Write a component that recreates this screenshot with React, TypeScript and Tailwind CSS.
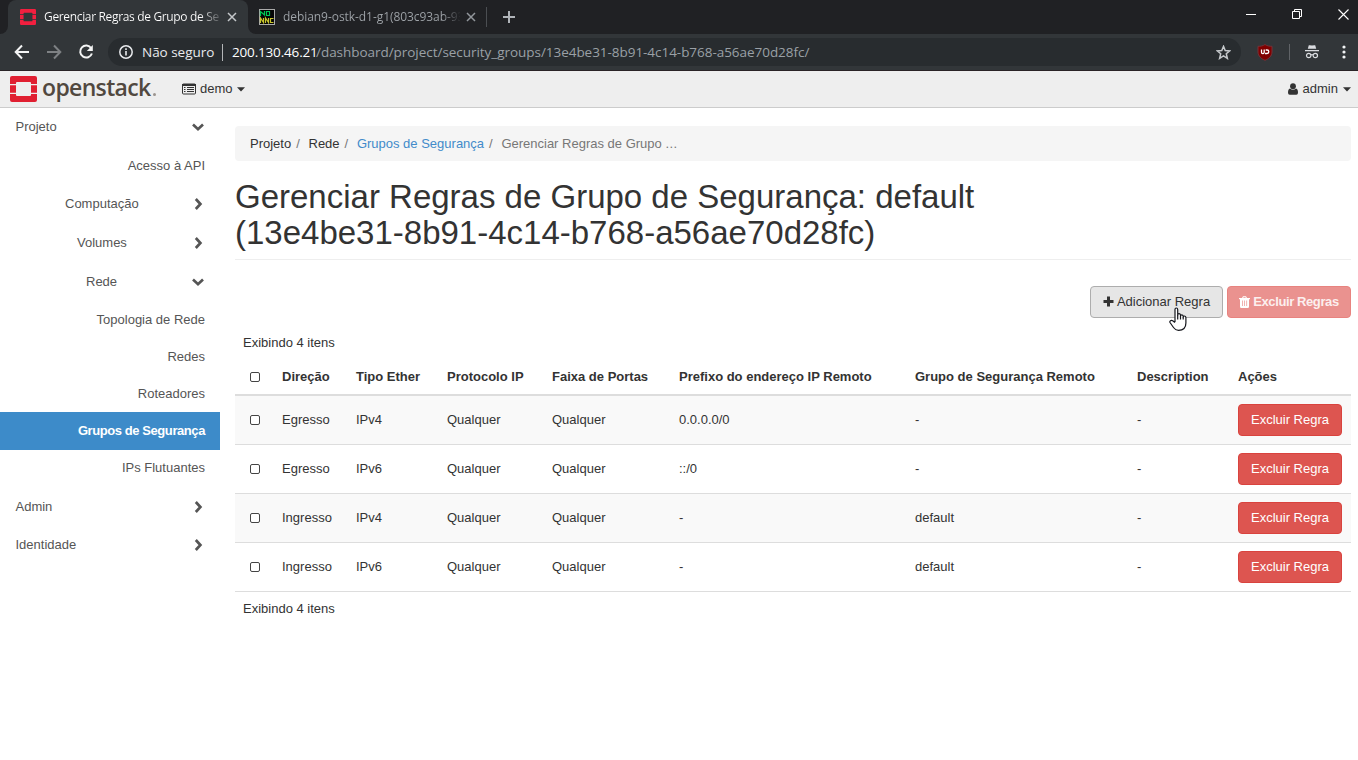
import React from "react";

type NavItem = { label: string; box: string; icon?: "down" | "right"; active?: boolean };

const NAV: NavItem[] = [
  { label: "Projeto", box: "h-[38px] pl-[15.5px]", icon: "down" },
  { label: "Acesso à API", box: "h-[39px]" },
  { label: "Computação", box: "h-[38px] pl-[65px]", icon: "right" },
  { label: "Volumes", box: "h-[39px] pl-[77px]", icon: "right" },
  { label: "Rede", box: "h-[39px] pl-[86px]", icon: "down" },
  { label: "Topologia de Rede", box: "h-[37px]" },
  { label: "Redes", box: "h-[37px]" },
  { label: "Roteadores", box: "h-[37px]" },
  { label: "Grupos de Segurança", box: "h-[38px]", active: true },
  { label: "IPs Flutuantes", box: "h-[37px] pb-[2px]" },
  { label: "Admin", box: "h-[39px] pl-[15.5px]", icon: "right" },
  { label: "Identidade", box: "h-[38px] pl-[15.5px]", icon: "right" },
];

const ROWS = [
  ["Egresso", "IPv4", "Qualquer", "Qualquer", "0.0.0.0/0", "-", "-"],
  ["Egresso", "IPv6", "Qualquer", "Qualquer", "::/0", "-", "-"],
  ["Ingresso", "IPv4", "Qualquer", "Qualquer", "-", "default", "-"],
  ["Ingresso", "IPv6", "Qualquer", "Qualquer", "-", "default", "-"],
];

const HEADERS = [
  "Direção",
  "Tipo Ether",
  "Protocolo IP",
  "Faixa de Portas",
  "Prefixo do endereço IP Remoto",
  "Grupo de Segurança Remoto",
  "Description",
  "Ações",
];

const GRID = "grid grid-cols-[39px_74px_91px_105px_127px_236px_222px_101px_121px] items-center";

function OpenStackMark({ className, color }: { className: string; color: string }) {
  return (
    <svg viewBox="0 0 27 26" className={className} fill={color} preserveAspectRatio="none">
      <path d="M2 0H25Q27 0 27 2V8H21V7Q21 6 20 6H7Q6 6 6 7V8H0V2Q0 0 2 0Z" />
      <path d="M0 9.3H6V16.7H0ZM21 9.3H27V16.7H21Z" />
      <path d="M0 18H6V19Q6 20 7 20H20Q21 20 21 19V18H27V24Q27 26 25 26H2Q0 26 0 24Z" />
    </svg>
  );
}

function Chevron({ dir }: { dir: "down" | "right" }) {
  return (
    <svg width="14" height="14" viewBox="0 0 14 14" fill="none" stroke="#555" strokeWidth="2.7">
      {dir === "down" ? <path d="M2 4.6L7 9.2L12 4.6" /> : <path d="M4.8 2L9.4 7L4.8 12" />}
    </svg>
  );
}

function Caret() {
  return (
    <svg width="8" height="5" viewBox="0 0 8 5" fill="#333">
      <path d="M0 0.3H8L4 4.6Z" />
    </svg>
  );
}

function Close({ color }: { color: string }) {
  return (
    <svg width="10" height="10" viewBox="0 0 10 10" stroke={color} strokeWidth="1.5">
      <path d="M1 1L9 9M9 1L1 9" />
    </svg>
  );
}

function Checkbox() {
  return <span className="mb-px ml-[14.5px] block h-[10px] w-[10px] rounded-[2px] border border-[#444] bg-white" />;
}

function TabStrip() {
  return (
    <div className="flex h-[34px] bg-[#202124] text-[12px] leading-[34px]">
      <div className="flex w-2 items-end bg-[#323639]">
        <div className="h-full w-2 rounded-br-lg bg-[#202124]" />
      </div>
      <div className="flex w-[240px] items-center rounded-t-lg bg-[#323639] pl-3">
        <OpenStackMark className="h-4 w-4 shrink-0" color="#f21f3f" />
        <span className="ml-2 w-[177px] bg-linear-to-r from-white from-88% to-[#323639] to-102% bg-clip-text tracking-[-0.34px] whitespace-nowrap text-transparent">
          Gerenciar Regras de Grupo de Se
        </span>
        <span className="ml-[6px]"><Close color="#c5c8cb" /></span>
      </div>
      <div className="flex w-[239px] items-center bg-[#323639]">
        <div className="flex h-full w-full items-center rounded-bl-lg bg-[#202124] pl-[11px]">
          <svg width="16" height="16" viewBox="0 0 16 16" className="shrink-0" fill="none">
            <rect x=".5" y=".5" width="15" height="15" fill="#050505" stroke="#aaa" />
            <path d="M1.500 7V2.500L5.500 6V2M7.500 2.500H10.500V6.500H7.500Z" stroke="#00c853" strokeWidth="1.200" />
            <path d="M1.500 14V9L4.500 13.500V9M6.500 14V9L9.500 13.500V9M14.500 9.500H11.500V13.500H14.500" stroke="#c8c52c" strokeWidth="1.200" />
          </svg>
          <span className="ml-2 w-[177px] bg-linear-to-r from-[#a0a5aa] from-90% to-[#202124] to-101% bg-clip-text tracking-[-0.06px] whitespace-nowrap text-transparent">
            debian9-ostk-d1-g1(803c93ab-93
          </span>
          <span className="ml-[6px]"><Close color="#92979c" /></span>
          <span className="ml-[10px] h-5 w-px bg-[#4b4e52]" />
        </div>
      </div>
      <svg width="12" height="12" viewBox="0 0 12 12" className="mt-[11px] ml-4" stroke="#b0b4b9" strokeWidth="2">
        <path d="M6 0V12M0 6H12" />
      </svg>
      <div className="mt-[9px] ml-auto flex h-[10px] items-center gap-[36px] pr-[9px]">
        <svg width="10" height="10" stroke="#fff"><path d="M0 5.5H10" /></svg>
        <svg width="10" height="10" stroke="#fff" fill="none">
          <path d="M.5 2.5H7.5V9.5H.5ZM2.5 2.5V.5H9.5V7.5H7.5" />
        </svg>
        <svg width="11" height="11" stroke="#fff" strokeWidth="1.1"><path d="M.5 .5L10.5 10.5M10.5 .5L.5 10.5" /></svg>
      </div>
    </div>
  );
}

function Toolbar() {
  return (
    <div className="flex h-[37px] items-center border-b border-[#292326] bg-[#323639]">
      <svg width="16" height="16" viewBox="0 0 16 16" className="ml-[14px]" fill="none" stroke="#f4f5f5" strokeWidth="2">
        <path d="M15 8H2M8 1.5L1.7 8L8 14.5" />
      </svg>
      <svg width="16" height="16" viewBox="0 0 16 16" className="ml-4" fill="none" stroke="#7e8184" strokeWidth="2">
        <path d="M1 8H14M8 1.5L14.3 8L8 14.5" />
      </svg>
      <svg width="16" height="16" viewBox="0 0 16 16" className="ml-4" fill="none" stroke="#f4f5f5" strokeWidth="2">
        <path d="M13.2 4.2A6 6 0 1 0 13.9 9.5" />
        <path d="M14.8 1V7H8.800Z" fill="#f4f5f5" stroke="none" />
      </svg>
      <div className="ml-[14px] flex h-7 w-[1133px] items-center rounded-full bg-[#282c2f] pl-[11px] whitespace-nowrap">
        <svg width="14" height="14" viewBox="0 0 14 14" fill="none" stroke="#e8eaed">
          <circle cx="7" cy="7" r="6.2" strokeWidth="1.5" />
          <path d="M7 6V10.5M7 3.3V4.9" strokeWidth="1.6" />
        </svg>
        <span className="ml-[9px] w-[72px] text-[13.5px] tracking-[-0.03px] text-[#e8eaed]">Não seguro</span>
        <span className="ml-2 h-[17px] w-px bg-[#b4b6b8]" />
        <span className="ml-[9px] w-[84px] text-[13.5px] tracking-[-0.17px] text-white">200.130.46.21</span>
        <span className="text-[13.5px] tracking-[-0.04px] text-[#9aa0a6]">
          /dashboard/project/security_groups/13e4be31-8b91-4c14-b768-a56ae70d28fc/
        </span>
        <svg width="15" height="15" viewBox="0 0 14 14" className="mr-[10px] ml-auto" fill="none" stroke="#c5c8cb" strokeWidth="1.4">
          <path d="M7 1.3L8.6 5.2L12.8 5.5L9.6 8.2L10.6 12.4L7 10.1L3.4 12.4L4.4 8.2L1.2 5.5L5.4 5.2Z" />
        </svg>
      </div>
      <svg width="16" height="17" viewBox="0 0 16 17" className="ml-4">
        <path d="M8 .5C10 2 12.5 2.3 15 2.3V8C15 12 11.5 15 8 16.3C4.500 15 1 12 1 8V2.300C3.500 2.300 6 2 8 .5Z" fill="#800000" stroke="#743238" />
        <path d="M4.500 5.500V8.300Q4.500 9.700 5.700 9.700T7.200 8.300V5.500M8.700 6H10Q11.800 6 11.800 7.700T10 9.500H8" fill="none" stroke="#fff" strokeWidth="1.300" />
      </svg>
      <span className="ml-4 h-4 w-px bg-[#606367]" />
      <svg width="14" height="14" viewBox="0 0 14 14" className="ml-[15px]" fill="#dadce0">
        <path d="M3.800 0.300Q5 0 7 .6Q9 0 10.200 .3L11.200 3.800H2.800ZM0 5H14V6.200H0Z" />
        <g fill="none" stroke="#dadce0" strokeWidth="1.200">
          <circle cx="3.700" cy="10.500" r="2.200" />
          <circle cx="10.300" cy="10.500" r="2.200" />
          <path d="M5.900 10Q7 9.300 8.100 10" />
        </g>
      </svg>
      <svg width="4" height="14" viewBox="0 0 4 14" className="ml-[23px]" fill="#f1f3f4">
        <circle cx="2" cy="2" r="1.600" /><circle cx="2" cy="7" r="1.600" /><circle cx="2" cy="12" r="1.600" />
      </svg>
    </div>
  );
}

function SiteHeader() {
  return (
    <header className="flex h-[37px] items-center border-b border-[#ccc] bg-[#eee] text-[13px] text-[#333]">
      <OpenStackMark className="ml-[10px] h-[26px] w-[27px]" color="#e01f31" />
      <div className="ml-[5px] flex w-[117px] items-center">
        <span className="-mt-[5px] w-[111px] font-['Open_Sans'] text-[23px] leading-[30px] font-semibold tracking-[-0.65px] text-[#51483f]">
          openstack
        </span>
        <span className="mt-[11px] h-[3px] w-[3px] rounded-full bg-[#9b948e]" />
      </div>
      <svg width="14" height="12" viewBox="0 0 14 12" className="ml-[23px]" fill="none" stroke="#333">
        <path d="M1.500 1H12.500Q13.500 1 13.500 2V10Q13.500 11 12.500 11H1.500Q.5 11 .5 10V2Q.5 1 1.500 1Z" />
        <path d="M0 2H14" strokeWidth="2" />
        <path d="M2 4.500H3.500M5 4.500H12M2 6.500H3.500M5 6.500H12M2 8.500H3.500M5 8.500H12" />
      </svg>
      <span className="mr-1 ml-1">demo</span>
      <Caret />
      <div className="ml-auto flex items-center pr-[7px]">
        <svg width="10" height="12" viewBox="0 0 10 12" fill="#333">
          <ellipse cx="5" cy="3.200" rx="2.900" ry="3" />
          <path d="M2 5.500Q0 6 0 9.800Q0 11.700 1.700 11.700H8.300Q10 11.700 10 9.800Q10 6 8 5.500Q5 8 2 5.500Z" />
        </svg>
        <span className="mr-[5px] ml-[5px]">admin</span>
        <Caret />
      </div>
    </header>
  );
}

function Sidebar() {
  return (
    <nav className="flex w-[220px] shrink-0 flex-col text-[#555]">
      {NAV.map((n) => (
        <div
          key={n.label}
          className={`flex items-center pr-[15px] ${n.box} ${n.icon ? "justify-between" : "justify-end"} ${
            n.active ? "bg-[#3d8bc9] font-bold tracking-[-0.42px] text-white" : ""
          }`}
        >
          <span>{n.label}</span>
          {n.icon && <Chevron dir={n.icon} />}
        </div>
      ))}
    </nav>
  );
}

function HandCursor() {
  return (
    <svg width="18" height="24" viewBox="0 0 18 24" className="absolute top-[20px] left-[78px]" fill="#fff" stroke="#15161c" strokeWidth="1.200" strokeLinejoin="round">
      <path d="M6 15V2.500Q6 1 7.300 1T8.700 2.500V8Q8.700 6.700 10 6.700T11.500 8V9Q11.500 7.800 12.700 7.800T14.200 9V10Q14.200 9 15.400 9T16.900 10.300V16Q16.900 23.300 9.500 23.300Q6.500 23.300 4.500 20.500L1 15.500Q.5 14.300 1.500 13.700T3.700 13.700L6 15.500" />
      <path d="M8.700 8V12.500M11.500 9V12.500M14.200 10V12.500" fill="none" />
    </svg>
  );
}

function RulesTable() {
  return (
    <section className="mt-[14px]">
      <div className="h-[21px] pl-2 leading-[21px]">Exibindo 4 itens</div>
      <div className={`${GRID} h-[43px] border-b-2 border-[#ddd] pt-[7px] font-bold whitespace-nowrap`}>
        <Checkbox />
        {HEADERS.map((h) => (
          <span key={h} className="pb-px pl-2">{h}</span>
        ))}
      </div>
      {ROWS.map((r, i) => (
        <div key={i} className={`${GRID} h-[49px] border-b border-[#ddd] ${i % 2 === 0 ? "bg-[#f9f9f9]" : ""}`}>
          <Checkbox />
          {r.map((c, j) => (
            <span key={j} className="pb-px pl-2">{c}</span>
          ))}
          <button className="ml-2 h-8 w-[104px] rounded-[4px] border border-[#d9433e] bg-[#dd5550] pb-px text-white">
            Excluir Regra
          </button>
        </div>
      ))}
      <div className="h-[33px] pl-2 leading-[33px]">Exibindo 4 itens</div>
    </section>
  );
}

export default function App() {
  return (
    <div className="h-[760px] w-[1358px] overflow-hidden bg-white font-['Liberation_Sans',Arial,sans-serif] text-[13px] leading-[18px] text-[#333]">
      <div className="font-['Open_Sans','Noto_Sans',sans-serif]">
        <TabStrip />
        <Toolbar />
      </div>
      <SiteHeader />
      <div className="flex">
        <Sidebar />
        <main className="ml-[15px] w-[1116px] pt-[18px]">
          <div className="flex h-[35px] items-center rounded-[4px] bg-[#f5f5f5] pl-[15px] text-[#777]">
            <span className="text-[#333]">Projeto</span>
            <span className="w-[17.3px] pl-[5px]">/</span>
            <span className="text-[#333]">Rede</span>
            <span className="w-[17.3px] pl-[5px]">/</span>
            <span className="text-[#428bca]">Grupos de Segurança</span>
            <span className="w-[17.3px] pl-[5px]">/</span>
            <span>Gerenciar Regras de Grupo <span className="tracking-[0.4px]">...</span></span>
          </div>
          <div className="mt-[18px] h-[81px] border-b border-[#eee]">
            <h1 className="text-[33px] leading-[36px]">
              Gerenciar Regras de Grupo de Segurança: default
              <br />
              (13e4be31-8b91-4c14-b768-a56ae70d28fc)
            </h1>
          </div>
          <div className="mt-[26px] flex justify-end gap-1">
            <button className="relative flex h-8 w-[133px] items-center justify-center gap-[3px] rounded-[4px] border border-[#adadad] bg-[#e6e6e6] pb-px">
              <svg width="11" height="11" viewBox="0 0 11 11" stroke="#333" strokeWidth="3"><path d="M5.500 .5V10.500M.5 5.500H10.500" /></svg>
              Adicionar Regra
              <HandCursor />
            </button>
            <button className="flex h-8 w-[124px] items-center justify-center gap-[3px] rounded-[4px] border border-[#e8837f] bg-[#ea928f] pb-px font-bold tracking-[-0.4px] text-[#fcefee]">
              <svg width="11" height="12" viewBox="0 0 11 12" fill="#fff">
                <path fillRule="evenodd" d="M0 2H3L4 .3H7L8 2H11V3.300H10V10.500Q10 12 8.700 12H2.300Q1 12 1 10.500V3.300H0ZM4.200 2H6.800L6.400 1.200H4.600ZM3 4.500V10H3.700V4.500ZM5.200 4.500V10H5.900V4.500ZM7.400 4.500V10H8.100V4.500Z" />
              </svg>
              Excluir Regras
            </button>
          </div>
          <RulesTable />
        </main>
      </div>
    </div>
  );
}
